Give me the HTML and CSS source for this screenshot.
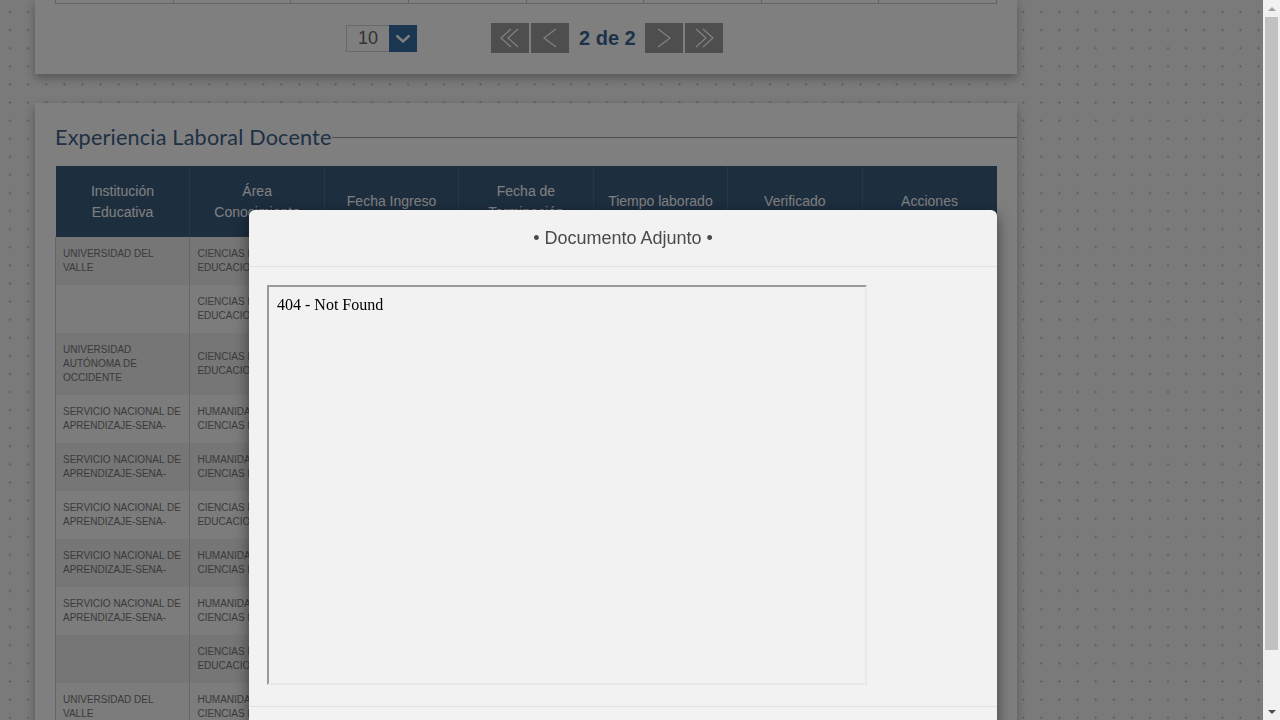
FILE: index.html
```html
<!DOCTYPE html>
<html lang="es">
<head>
<meta charset="utf-8">
<title>Experiencia Laboral Docente</title>
<link rel="stylesheet" href="styles.css">
</head>
<body>
<div class="page">
  <section class="card card-top">
    <div class="table-end"><span></span><span></span><span></span><span></span><span></span><span></span><span></span><span></span></div>
    <div class="pager-row">
      <div class="size-select">
        <span class="size-value">10</span>
        <span class="size-btn"><svg width="16" height="9" viewBox="0 0 16 9"><polyline points="1.5,1.5 8,7.5 14.5,1.5" fill="none" stroke="#fff" stroke-width="2.4"/></svg></span>
      </div>
      <div class="pager">
        <button class="pg-btn" type="button"><svg width="22" height="20" viewBox="0 0 22 20"><polyline points="12,1 2,10 12,19" fill="none" stroke="#fff" stroke-width="1.3"/><polyline points="19,1 9,10 19,19" fill="none" stroke="#fff" stroke-width="1.3"/></svg></button>
        <button class="pg-btn" type="button"><svg width="16" height="20" viewBox="0 0 16 20"><polyline points="14,1 2,10 14,19" fill="none" stroke="#fff" stroke-width="1.3"/></svg></button>
        <span class="pg-label">2 de 2</span>
        <button class="pg-btn" type="button"><svg width="16" height="20" viewBox="0 0 16 20"><polyline points="2,1 14,10 2,19" fill="none" stroke="#fff" stroke-width="1.3"/></svg></button>
        <button class="pg-btn" type="button"><svg width="22" height="20" viewBox="0 0 22 20"><polyline points="3,1 13,10 3,19" fill="none" stroke="#fff" stroke-width="1.3"/><polyline points="10,1 20,10 10,19" fill="none" stroke="#fff" stroke-width="1.3"/></svg></button>
      </div>
    </div>
  </section>

  <section class="card card-exp">
    <h2 class="section-title">Experiencia Laboral Docente</h2>
    <table class="exp-table">
      <thead>
        <tr>
          <th>Institución<br>Educativa</th>
          <th>Área<br>Conocimiento</th>
          <th>Fecha Ingreso</th>
          <th>Fecha de<br>Terminación</th>
          <th>Tiempo laborado</th>
          <th>Verificado</th>
          <th>Acciones</th>
        </tr>
      </thead>
      <tbody>
        <tr><td>UNIVERSIDAD DEL VALLE</td><td>CIENCIAS DE LA EDUCACION</td><td>2015-02-02</td><td>2015-06-30</td><td>5 MESES</td><td>SI</td><td></td></tr>
        <tr><td></td><td>CIENCIAS DE LA EDUCACION</td><td>2016-02-01</td><td>2016-06-30</td><td>5 MESES</td><td>SI</td><td></td></tr>
        <tr><td>UNIVERSIDAD AUTÓNOMA DE OCCIDENTE</td><td>CIENCIAS DE LA EDUCACION</td><td>2016-08-01</td><td>2016-12-15</td><td>4 MESES</td><td>SI</td><td></td></tr>
        <tr><td>SERVICIO NACIONAL DE APRENDIZAJE-SENA-</td><td>HUMANIDADES Y CIENCIAS RELIGIOSAS</td><td>2017-01-16</td><td>2017-06-30</td><td>5 MESES</td><td>SI</td><td></td></tr>
        <tr><td>SERVICIO NACIONAL DE APRENDIZAJE-SENA-</td><td>HUMANIDADES Y CIENCIAS RELIGIOSAS</td><td>2017-07-10</td><td>2017-12-15</td><td>5 MESES</td><td>SI</td><td></td></tr>
        <tr><td>SERVICIO NACIONAL DE APRENDIZAJE-SENA-</td><td>CIENCIAS DE LA EDUCACION</td><td>2018-01-15</td><td>2018-06-29</td><td>5 MESES</td><td>SI</td><td></td></tr>
        <tr><td>SERVICIO NACIONAL DE APRENDIZAJE-SENA-</td><td>HUMANIDADES Y CIENCIAS RELIGIOSAS</td><td>2018-07-09</td><td>2018-12-14</td><td>5 MESES</td><td>SI</td><td></td></tr>
        <tr><td>SERVICIO NACIONAL DE APRENDIZAJE-SENA-</td><td>HUMANIDADES Y CIENCIAS RELIGIOSAS</td><td>2019-01-21</td><td>2019-06-28</td><td>5 MESES</td><td>SI</td><td></td></tr>
        <tr><td></td><td>CIENCIAS DE LA EDUCACION</td><td>2019-08-01</td><td>2019-12-13</td><td>4 MESES</td><td>SI</td><td></td></tr>
        <tr><td>UNIVERSIDAD DEL VALLE</td><td>HUMANIDADES Y CIENCIAS RELIGIOSAS</td><td>2020-02-03</td><td>2020-06-30</td><td>5 MESES</td><td>SI</td><td></td></tr>
      </tbody>
    </table>
  </section>
</div>

<div class="backdrop"></div>

<div class="modal">
  <div class="modal-header">
    <h4 class="modal-title">• Documento Adjunto •</h4>
  </div>
  <div class="modal-body">
    <div class="doc-frame"><p class="doc-text">404 - Not Found</p></div>
  </div>
  <div class="modal-footer"></div>
</div>

<div class="scrollbar" aria-hidden="true">
  <span class="sb-btn"><span class="sb-arrow-up"></span></span>
  <span class="sb-thumb"></span>
  <span class="sb-spacer"></span>
  <span class="sb-btn"><span class="sb-arrow-down"></span></span>
</div>
</body>
</html>
```

FILE: styles.css
```css
html {
  overflow: hidden;
  background-color: #f4f4f4;
  background-image: radial-gradient(circle, #bdbdbd 0, #bdbdbd 0.8px, transparent 1.4px);
  background-size: 18.1px 18.1px;
  background-position: 1px 3px;
}

body {
  margin: 0;
  font-family: "Liberation Sans", Arial, sans-serif;
  color: #333;
}

.page {
  width: 982px;
  margin-left: 35px;
  padding-bottom: 27px;
}

.card {
  background: #ffffff;
  box-shadow: 0 4px 9px rgba(0, 0, 0, 0.3);
}

/* ---------- top card (end of previous table + pager) ---------- */
.card-top {
  padding: 0 20px 21px;
}

.table-end {
  display: flex;
  height: 3px;
  border-bottom: 1px solid #c8c8c8;
  border-left: 1px solid #c8c8c8;
}

.table-end span {
  flex: 1;
  border-right: 1px solid #c8c8c8;
}

.pager-row {
  display: flex;
  align-items: center;
  height: 30px;
  margin-top: 19px;
  padding-left: 291px;
}

.size-select {
  display: flex;
  height: 27px;
}

.size-value {
  box-sizing: border-box;
  width: 43px;
  height: 27px;
  border: 1px solid #d2d2d2;
  border-right: none;
  background: #fff;
  color: #666;
  font-size: 18px;
  line-height: 25px;
  text-align: center;
}

.size-btn {
  display: flex;
  align-items: center;
  justify-content: center;
  width: 28px;
  height: 27px;
  background: #346ca3;
}

.pager {
  display: flex;
  align-items: center;
  gap: 2px;
  margin-left: 74px;
}

.pg-btn {
  display: flex;
  align-items: center;
  justify-content: center;
  width: 38px;
  height: 30px;
  padding: 0;
  border: none;
  background: #9c9c9c;
}

.pg-label {
  margin: 0 7px 0 8px;
  font-size: 20px;
  font-weight: bold;
  color: #3a6590;
  line-height: 30px;
}

/* ---------- experiencia card ---------- */
.card-exp {
  margin-top: 29px;
  padding: 21px 20px 20px;
}

.section-title {
  display: flex;
  align-items: center;
  margin: 0 -20px 16px 0;
  font-family: "Lato", "Liberation Sans", sans-serif;
  font-weight: 400;
  font-size: 21.6px;
  line-height: 26px;
  color: #3d6289;
  letter-spacing: 0.2px;
}

.section-title::after {
  content: "";
  flex: 1;
  height: 0;
  border-top: 1px solid #999;
  margin-top: 1px;
}

.exp-table {
  width: 942px;
  table-layout: fixed;
  border-collapse: collapse;
}

.exp-table th {
  height: 71px;
  box-sizing: border-box;
  padding: 0 8px;
  background: #3a5c7e;
  color: #ffffff;
  font-weight: normal;
  font-size: 14px;
  line-height: 21px;
  text-align: center;
  vertical-align: middle;
  border-right: 1px solid rgba(255, 255, 255, 0.12);
}

.exp-table th:last-child {
  border-right: none;
}

.exp-table td {
  height: 28px;
  padding: 10px 4px 10px 7px;
  font-size: 10px;
  line-height: 14px;
  color: #767676;
  text-align: left;
  vertical-align: middle;
  border-right: 1px solid #cccccc;
  border-left: 1px solid #cccccc;
}

.exp-table tbody tr:nth-child(odd) td {
  background: #ececec;
}

.exp-table tbody tr:nth-child(even) td {
  background: #f8f8f8;
}

/* ---------- modal ---------- */
.backdrop {
  position: fixed;
  inset: 0;
  background: rgba(0, 0, 0, 0.5);
}

.modal {
  position: fixed;
  top: 210px;
  left: 249px;
  width: 748px;
  height: 560px;
  background: #f2f2f2;
  border-radius: 6px;
  box-shadow: 0 5px 15px rgba(0, 0, 0, 0.5);
}

.modal-header {
  height: 56px;
  border-bottom: 1px solid #e2e2e2;
}

.modal-title {
  margin: 0;
  font-size: 18px;
  font-weight: normal;
  line-height: 56px;
  text-align: center;
  color: #4a4a4a;
}

.modal-body {
  padding: 18px;
}

.doc-frame {
  box-sizing: border-box;
  width: 600px;
  height: 400px;
  margin-bottom: 3px;
  border-top: 2px solid #9a9a9a;
  border-left: 2px solid #9a9a9a;
  border-right: 2px solid #e9e9e9;
  border-bottom: 2px solid #e9e9e9;
}

.doc-text {
  margin: 0;
  padding: 8px;
  font-family: "Liberation Serif", "Times New Roman", serif;
  font-size: 16px;
  line-height: 19px;
  color: #000;
}

.modal-footer {
  border-top: 1px solid #e2e2e2;
}

/* ---------- window scrollbar ---------- */
.scrollbar {
  position: fixed;
  top: 0;
  right: 0;
  bottom: 0;
  width: 17px;
  display: flex;
  flex-direction: column;
  background: #f1f1f1;
}

.sb-btn {
  display: flex;
  align-items: center;
  justify-content: center;
  height: 17px;
  flex: none;
}

.sb-arrow-up {
  width: 0;
  height: 0;
  border-left: 4px solid transparent;
  border-right: 4px solid transparent;
  border-bottom: 4px solid #a3a3a3;
}

.sb-arrow-down {
  width: 0;
  height: 0;
  border-left: 4px solid transparent;
  border-right: 4px solid transparent;
  border-top: 4px solid #505050;
}

.sb-thumb {
  flex: none;
  height: 633px;
  margin: 0 2px;
  background: #c1c1c1;
}

.sb-spacer {
  flex: 1;
}
```
